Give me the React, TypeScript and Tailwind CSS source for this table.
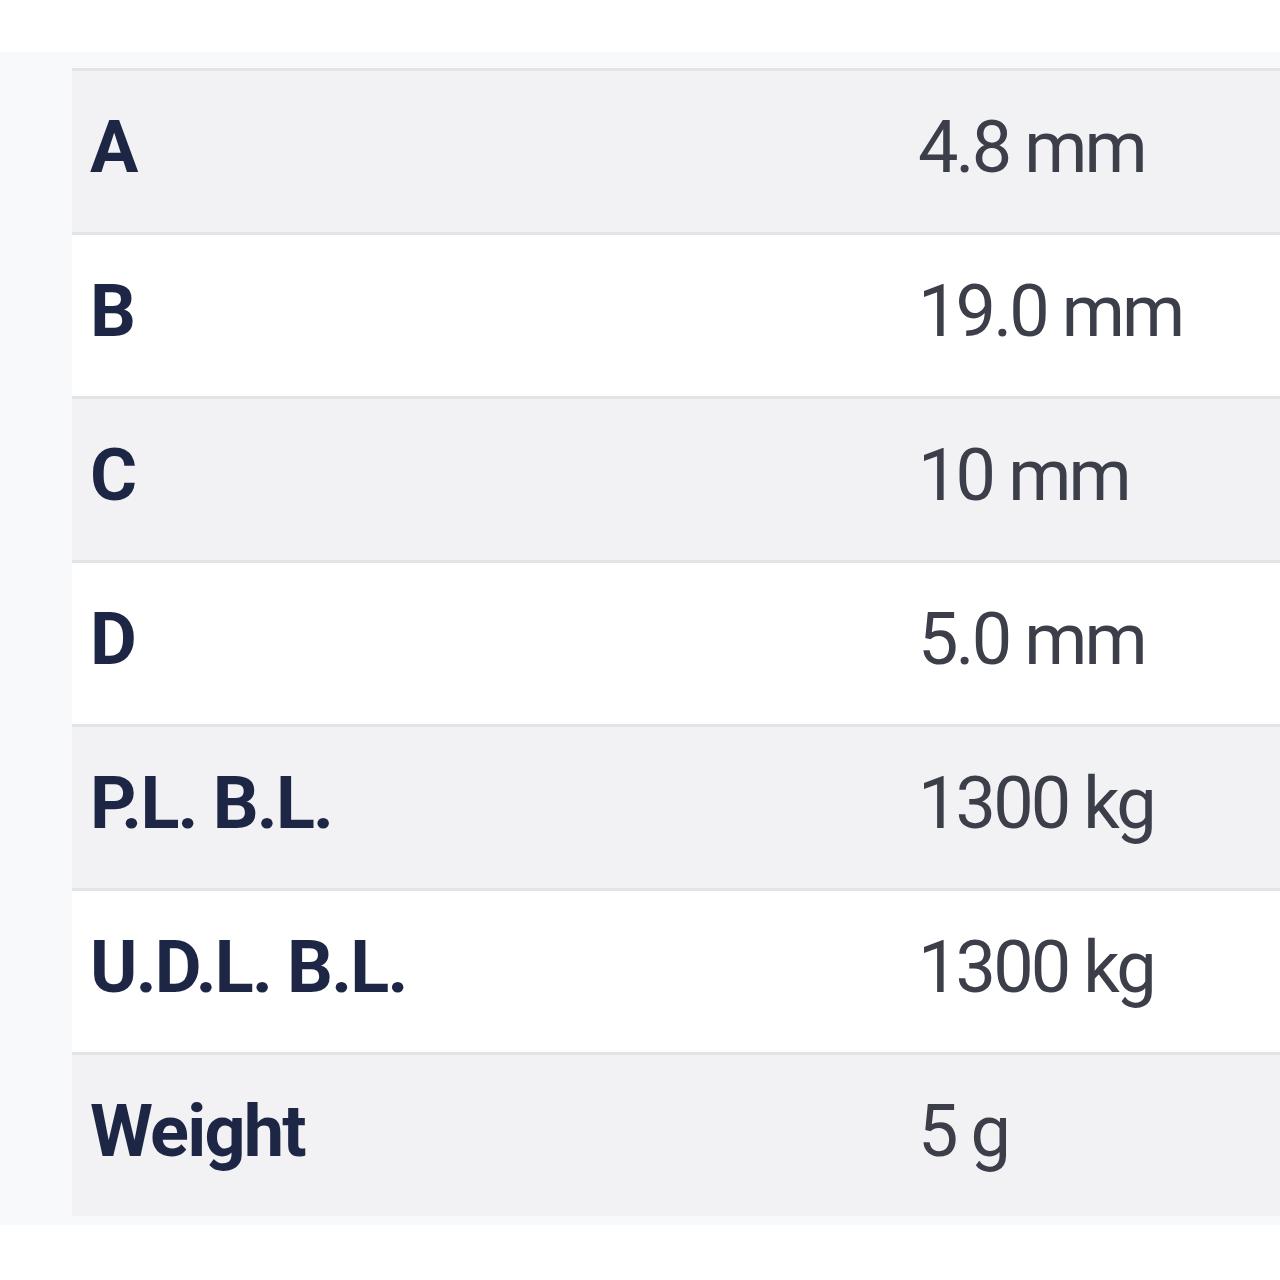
const specs = [
  { label: 'A', value: '4.8 mm' },
  { label: 'B', value: '19.0 mm' },
  { label: 'C', value: '10 mm' },
  { label: 'D', value: '5.0 mm' },
  { label: 'P.L. B.L.', value: '1300 kg' },
  { label: 'U.D.L. B.L.', value: '1300 kg' },
  { label: 'Weight', value: '5 g' },
];

export default function App() {
  return (
    <div className="min-h-[1280px] bg-white pt-[52px] font-['Roboto','Liberation_Sans',sans-serif]">
      <div className="bg-[#f8f9fb] pl-[72px] pt-4 pb-[9px]">
        <div className="flex flex-col">
          {specs.map((row, i) => (
            <div
              key={row.label}
              className={`grid h-[164px] grid-cols-[828px_1fr] items-center border-t-[3px] border-[#e3e4e7] ${
                i % 2 === 0 ? 'bg-[#f2f2f4]' : 'bg-white'
              }`}
            >
              <div className="pl-[18px] pb-2 text-[72px] font-bold tracking-[-0.025em] text-[#1d2645]">
                {row.label}
              </div>
              <div className="pl-[18px] pb-2 text-[72px] font-normal tracking-[-0.04em] text-[#3c3f49]">
                {row.value}
              </div>
            </div>
          ))}
        </div>
      </div>
    </div>
  );
}
